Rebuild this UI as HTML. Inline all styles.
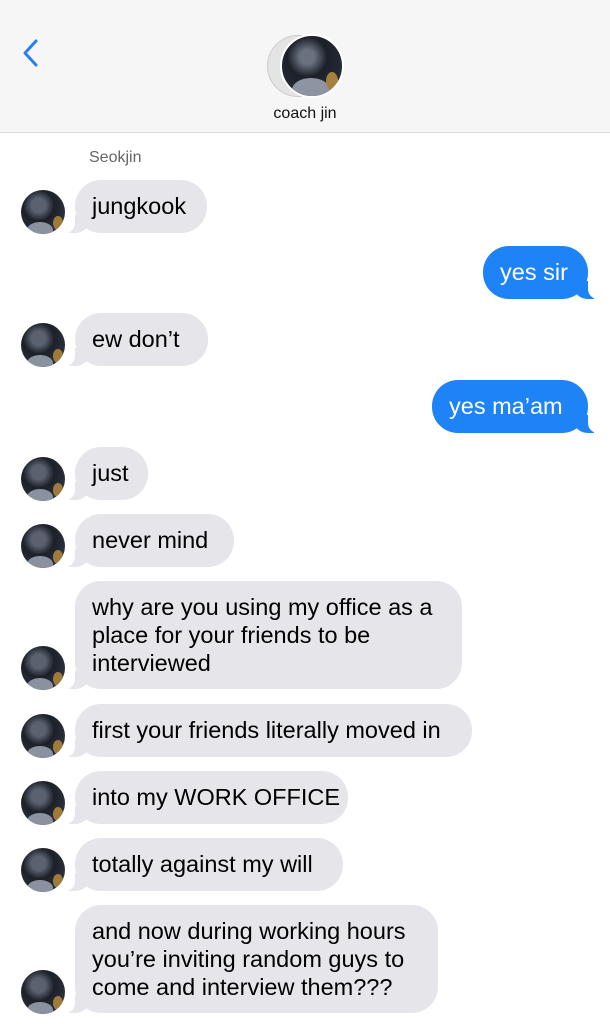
<!DOCTYPE html>
<html><head><meta charset="utf-8"><style>
*{margin:0;padding:0;box-sizing:border-box}
body{width:610px;height:1024px;background:#fff;position:relative;overflow:hidden;font-family:"Liberation Sans",Arial,sans-serif}
.hdr{position:absolute;left:0;top:0;width:610px;height:133px;background:#f6f6f6;border-bottom:1px solid #d8d8d8}
.b{position:absolute;border-radius:26px;font-size:23.5px;line-height:28px;padding:12px 17px 13px 17px;white-space:nowrap}
.l{left:75px;background:#e5e5ea;color:#000}
.r{background:#1e83f7;color:#fff}
.l::before{content:"";position:absolute;left:-6px;bottom:0;width:20px;height:18px;background:#e5e5ea;border-bottom-right-radius:14px 12px}
.l::after{content:"";position:absolute;left:-12px;bottom:0;width:12px;height:20px;background:#fff;border-bottom-right-radius:10px}
.r::before{content:"";position:absolute;right:-6px;bottom:0;width:20px;height:18px;background:#1e83f7;border-bottom-left-radius:14px 12px}
.r::after{content:"";position:absolute;right:-12px;bottom:0;width:12px;height:20px;background:#fff;border-bottom-left-radius:10px}
.av{position:absolute;left:21px;width:44px;height:44px;border-radius:50%;background:radial-gradient(circle at 40% 35%,#5a6270 0 18%,#1c2028 40%,#2a2f3a 70%);overflow:hidden}
.av::after{content:"";position:absolute;left:6px;bottom:-4px;width:26px;height:16px;border-radius:50% 50% 0 0;background:#8a92a0}
.av::before{content:"";position:absolute;right:2px;bottom:4px;width:10px;height:14px;border-radius:50%;background:#a07a3a}
</style></head><body>
<div class="hdr">
<svg style="position:absolute;left:20px;top:38px" width="20" height="30" viewBox="0 0 20 30"><path d="M16 3 L5 15 L16 27" fill="none" stroke="#2a7ff0" stroke-width="3" stroke-linecap="round" stroke-linejoin="round"/></svg>
<div style="position:absolute;left:267px;top:35px;width:62px;height:62px;border-radius:50%;background:#e4e4e4;border:1px solid #ccc"></div>
<div style="position:absolute;left:280px;top:34px;width:64px;height:64px;border-radius:50%;border:2px solid #fff;background:radial-gradient(circle at 42% 35%,#6a7280 0 14%,#1c2028 38%,#252a34 70%);overflow:hidden"><div style="position:absolute;left:10px;bottom:-6px;width:38px;height:24px;border-radius:50% 50% 0 0;background:#8d95a3"></div><div style="position:absolute;right:4px;bottom:6px;width:12px;height:18px;border-radius:50%;background:#a8813e"></div></div>
<div style="position:absolute;left:0;width:610px;top:105px;text-align:center;font-size:16px;color:#111">coach jin</div>
</div>
<div style="position:absolute;left:89px;top:149px;font-size:16px;color:#666">Seokjin</div>

<div class="b l" style="top:180px;height:53px;width:132px">jungkook</div><div class="av" style="top:190px"></div>
<div class="b r" style="top:246px;height:53px;left:483px;width:105px">yes sir</div>
<div class="b l" style="top:313px;height:53px;width:133px">ew don’t</div><div class="av" style="top:323px"></div>
<div class="b r" style="top:380px;height:53px;left:432px;width:156px">yes ma’am</div>
<div class="b l" style="top:447px;height:53px;width:73px">just</div><div class="av" style="top:457px"></div>
<div class="b l" style="top:514px;height:53px;width:159px">never mind</div><div class="av" style="top:524px"></div>
<div class="b l" style="top:581px;height:108px;width:387px">why are you using my office as a<br>place for your friends to be<br>interviewed</div><div class="av" style="top:646px"></div>
<div class="b l" style="top:704px;height:53px;width:397px">first your friends literally moved in</div><div class="av" style="top:714px"></div>
<div class="b l" style="top:771px;height:53px;width:273px">into my WORK OFFICE</div><div class="av" style="top:781px"></div>
<div class="b l" style="top:838px;height:53px;width:268px">totally against my will</div><div class="av" style="top:848px"></div>
<div class="b l" style="top:905px;height:108px;width:363px">and now during working hours<br>you’re inviting random guys to<br>come and interview them???</div><div class="av" style="top:970px"></div>
</body></html>
